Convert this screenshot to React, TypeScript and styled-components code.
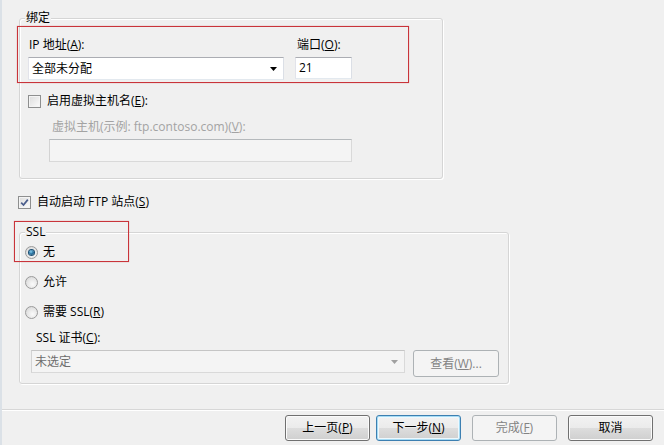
import React from 'react';
import styled, { createGlobalStyle, css } from 'styled-components';

const GlobalStyle = createGlobalStyle`
  html, body {
    margin: 0;
    padding: 0;
    background: #f0f0f0;
  }
  body {
    font-family: "Open Sans", "Noto Sans CJK SC", sans-serif;
    font-size: 12px;
    line-height: 16px;
    color: #000;
  }
`;

const Page = styled.div`
  position: relative;
  width: 664px;
  height: 445px;
  box-sizing: border-box;
  border-left: 2px solid #dbe1e7;
  background: #f0f0f0;
  display: flex;
  flex-direction: column;
  overflow: hidden;
`;

const Content = styled.div`
  flex: 1;
  padding: 10px 0 0 17px;
`;

const GroupBox = styled.fieldset<{ $width: number; $gap?: number }>`
  box-sizing: border-box;
  width: ${p => p.$width}px;
  margin: ${p => p.$gap ?? 0}px 0 0 0;
  padding: 0;
  min-width: 0;
  border: 1px solid #d5d5d5;
  border-radius: 3px;
  box-shadow: inset 1px 1px 0 #fff, 1px 1px 0 #fff;
`;

const Legend = styled.legend`
  margin-left: 5px;
  padding: 0 1px;
  line-height: 16px;
  background: #f0f0f0;
`;

const GroupBody = styled.div<{ $top: number; $bottom: number; $left: number }>`
  display: flex;
  flex-direction: column;
  align-items: flex-start;
  padding: ${p => p.$top}px 0 ${p => p.$bottom}px ${p => p.$left}px;
`;

const FieldRow = styled.div`
  display: flex;
  gap: 11px;
`;

const FieldColumn = styled.div`
  display: flex;
  flex-direction: column;
  gap: 4px;
`;

const Label = styled.div<{ $disabled?: boolean; $indent?: number; $gap?: number }>`
  height: 16px;
  padding-left: ${p => p.$indent ?? 1}px;
  margin-top: ${p => p.$gap ?? 0}px;
  color: ${p => (p.$disabled ? '#a3a3a3' : '#000')};
  white-space: nowrap;
`;

const Key = styled.u`
  text-underline-offset: 1px;
`;

const fieldBorder = css`
  box-sizing: border-box;
  border: 1px solid;
  border-color: #abadb3 #dbdfe6 #e3e9ef #e2e3ea;
`;

const ComboBox = styled.div<{ $width: number; $disabled?: boolean; $indent?: number }>`
  ${fieldBorder};
  width: ${p => p.$width}px;
  height: 23px;
  margin-left: ${p => p.$indent ?? 0}px;
  padding: 0 6px 0 3px;
  display: flex;
  align-items: center;
  justify-content: space-between;
  background: #fff;
  ${p =>
    p.$disabled &&
    css`
      background: #f4f4f4;
      border-color: #c5c5c5 #d9d9d9 #d9d9d9 #d3d3d3;
      color: #6d6d6d;
    `}
`;

const ArrowIcon = ({ color }: { color: string }) => (
  <svg width="7" height="4" viewBox="0 0 7 4">
    <polygon points="0,0 7,0 3.5,4" fill={color} />
  </svg>
);

const TextBox = styled.div<{ $width: number; $height: number; $disabled?: boolean; $indent?: number; $gap?: number }>`
  ${fieldBorder};
  width: ${p => p.$width}px;
  height: ${p => p.$height}px;
  margin: ${p => p.$gap ?? 0}px 0 0 ${p => p.$indent ?? 0}px;
  padding: 0 3px;
  display: flex;
  align-items: center;
  background: #fff;
  ${p =>
    p.$disabled &&
    css`
      background: #f4f4f4;
      border-color: #b5b9bc #d9d9d9 #d9d9d9 #d3d3d3;
    `}
`;

const ToggleRow = styled.div<{ $gap?: number; $indent?: number; $spacing?: number }>`
  display: flex;
  align-items: center;
  gap: ${p => p.$spacing ?? 6}px;
  height: 16px;
  margin: ${p => p.$gap ?? 0}px 0 0 ${p => p.$indent ?? 0}px;
  white-space: nowrap;
`;

const CheckBox = styled.span`
  box-sizing: border-box;
  width: 13px;
  height: 13px;
  border: 1px solid #8e8f8f;
  background: linear-gradient(135deg, #dcdcdc, #fcfcfc);
  box-shadow: inset 0 0 0 1px #f4f4f4;
  display: inline-flex;
  align-items: center;
  justify-content: center;
`;

const CheckMark = () => (
  <svg width="9" height="9" viewBox="0 0 9 9">
    <path d="M1.2 4.6 L3.5 7 L7.8 1.6" fill="none" stroke="#4a5d8c" strokeWidth="1.7" />
  </svg>
);

const Radio = styled.span<{ $checked?: boolean }>`
  box-sizing: border-box;
  width: 13px;
  height: 13px;
  border-radius: 50%;
  border: 1px solid #9a9a9a;
  background: radial-gradient(circle at 60% 65%, #fafafa 0%, #e3e3e3 60%, #cfcfcf 100%);
  display: inline-flex;
  align-items: center;
  justify-content: center;
  &::after {
    content: '';
    display: ${p => (p.$checked ? 'block' : 'none')};
    width: 5px;
    height: 5px;
    border-radius: 50%;
    background: radial-gradient(circle at 40% 35%, #8bd1f1 0%, #2e7aa8 45%, #0f3d63 100%);
    box-shadow: 0 0 0 1px #1b4f74;
  }
`;

const ActionRow = styled.div`
  display: flex;
  align-items: flex-start;
  gap: 8px;
  margin-top: 4px;
`;

const Footer = styled.div`
  height: 36px;
  box-sizing: border-box;
  border-top: 1px solid #d7d7d7;
  box-shadow: inset 0 1px 0 #fff;
  padding: 5px 11px 0 0;
  display: flex;
  justify-content: flex-end;
`;

type ButtonKind = 'normal' | 'default' | 'disabled';

const Button = styled.button<{ $kind?: ButtonKind; $width?: number; $height?: number; $space?: number }>`
  box-sizing: border-box;
  width: ${p => p.$width ?? 85}px;
  height: ${p => p.$height ?? 26}px;
  margin-left: ${p => p.$space ?? 0}px;
  padding: 0;
  font: inherit;
  color: #000;
  border: 1px solid #707070;
  border-radius: 3px;
  background: linear-gradient(#f2f2f2 0%, #ebebeb 50%, #dddddd 51%, #cfcfcf 100%);
  box-shadow: inset 0 0 0 1px #fbfbfb;
  ${p =>
    p.$kind === 'default' &&
    css`
      border-color: #3c7fb1;
      box-shadow: inset 0 0 0 1px #a6dcf5, inset 0 0 0 2px #eef8fd;
    `}
  ${p =>
    p.$kind === 'disabled' &&
    css`
      color: #838383;
      border-color: #adb2b5;
      background: #f4f4f4;
      box-shadow: none;
    `}
`;

const Annotation = styled.div<{ $x: number; $y: number; $w: number; $h: number }>`
  position: absolute;
  left: ${p => p.$x}px;
  top: ${p => p.$y}px;
  width: ${p => p.$w}px;
  height: ${p => p.$h}px;
  box-sizing: border-box;
  border: 1px solid #c9343a;
  box-shadow: 0 0 1px rgba(201, 52, 58, 0.5);
  pointer-events: none;
`;

export default function App() {
  return (
    <>
      <GlobalStyle />
      <Page>
        <Content>
          <GroupBox $width={424}>
            <Legend>绑定</Legend>
            <GroupBody $top={11} $bottom={16} $left={8}>
              <FieldRow>
                <FieldColumn>
                  <Label>
                    IP 地址(<Key>A</Key>):
                  </Label>
                  <ComboBox $width={256}>
                    <span>全部未分配</span>
                    <ArrowIcon color="#000" />
                  </ComboBox>
                </FieldColumn>
                <FieldColumn>
                  <Label $indent={2}>
                    端口(<Key>O</Key>):
                  </Label>
                  <TextBox $width={57} $height={22}>
                    21
                  </TextBox>
                </FieldColumn>
              </FieldRow>
              <ToggleRow $gap={13}>
                <CheckBox />
                <span>
                  启用虚拟主机名(<Key>E</Key>):
                </span>
              </ToggleRow>
              <Label $disabled $indent={24} $gap={10}>
                虚拟主机(示例: ftp.contoso.com)(<Key>V</Key>):
              </Label>
              <TextBox $width={303} $height={23} $disabled $indent={21} $gap={4} />
            </GroupBody>
          </GroupBox>

          <ToggleRow $gap={15} $indent={-1}>
            <CheckBox>
              <CheckMark />
            </CheckBox>
            <span>
              自动启动 FTP 站点(<Key>S</Key>)
            </span>
          </ToggleRow>

          <GroupBox $width={490} $gap={14}>
            <Legend>SSL</Legend>
            <GroupBody $top={4} $bottom={6} $left={5}>
              <ToggleRow $spacing={5}>
                <Radio $checked />
                <span>无</span>
              </ToggleRow>
              <ToggleRow $spacing={5} $gap={14}>
                <Radio />
                <span>允许</span>
              </ToggleRow>
              <ToggleRow $spacing={5} $gap={14}>
                <Radio />
                <span>
                  需要 SSL(<Key>R</Key>)
                </span>
              </ToggleRow>
              <Label $indent={11} $gap={10}>
                SSL 证书(<Key>C</Key>):
              </Label>
              <ActionRow>
                <ComboBox $width={374} $indent={6} $disabled>
                  <span>未选定</span>
                  <ArrowIcon color="#a0a0a0" />
                </ComboBox>
                <Button $kind="disabled" $width={86} $height={27}>
                  查看(<Key>W</Key>)...
                </Button>
              </ActionRow>
            </GroupBody>
          </GroupBox>
        </Content>

        <Footer>
          <Button>
            上一页(<Key>P</Key>)
          </Button>
          <Button $kind="default" $space={6}>
            下一步(<Key>N</Key>)
          </Button>
          <Button $kind="disabled" $space={11}>
            完成(<Key>F</Key>)
          </Button>
          <Button $space={11}>取消</Button>
        </Footer>

        <Annotation $x={15} $y={26} $w={392} $h={57} />
        <Annotation $x={12} $y={221} $w={115} $h={41} />
      </Page>
    </>
  );
}
